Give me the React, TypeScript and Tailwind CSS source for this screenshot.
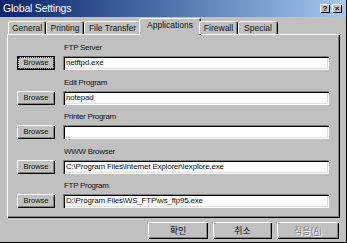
import React from "react";

const FONT = { fontFamily: '"Liberation Sans", Arial, "Noto Sans CJK KR", sans-serif' };
const KFONT = { fontFamily: '"Noto Sans CJK KR", "Liberation Sans", sans-serif' };

const rows = [
  { label: "FTP Server", value: "netftpd.exe", focus: true },
  { label: "Edit Program", value: "notepad" },
  { label: "Printer Program", value: "" },
  { label: "WWW Browser", value: "C:\\Program Files\\Internet Explorer\\Iexplore.exe" },
  { label: "FTP Program", value: "D:\\Program Files\\WS_FTP\\ws_ftp95.exe" },
];

const tabs = [
  { name: "General", w: "w-[38px]" },
  { name: "Printing", w: "w-[38px]" },
  { name: "File Transfer", w: "w-[57px]" },
  { name: "Applications", w: "w-[62px]", sel: true },
  { name: "Firewall", w: "w-[39px]" },
  { name: "Special", w: "w-[40px]" },
];

export default function App() {
  return (
    <div
      className="w-[347px] h-[243px] bg-[#c0c0c0] flex flex-col overflow-hidden border-b border-r border-black text-[#111]"
      style={FONT}
    >
      {/* Title bar */}
      <div className="h-[17px] shrink-0 bg-gradient-to-r from-[#0a246a] to-[#a6caf0] flex items-center justify-between pl-[3px] pr-[4px]">
        <span className="text-white text-[10.5px] leading-none tracking-[-0.2px]">Global Settings</span>
        <div className="flex gap-[2px]">
          <div className="w-[10px] h-[9px] bg-[#c0c0c0] shadow-[inset_1px_1px_0_#fff,inset_-1px_-1px_0_#000] flex items-center justify-center text-[8px] font-bold leading-none text-black">?</div>
          <div className="w-[10px] h-[9px] bg-[#c0c0c0] shadow-[inset_1px_1px_0_#fff,inset_-1px_-1px_0_#000] flex items-center justify-center text-[8px] font-bold leading-none text-black">×</div>
        </div>
      </div>

      {/* Tabs */}
      <div className="h-[17px] shrink-0 flex items-end pl-[8px] relative z-10">
        {tabs.map((t) =>
          t.sel ? (
            <div
              key={t.name}
              className={`${t.w} -mx-[2px] h-[17px] -mb-[1px] bg-[#c0c0c0] rounded-t-[2px] shadow-[inset_1px_1px_0_#fff,inset_-1px_0_0_#000,inset_-2px_0_0_#808080] flex items-start justify-center pt-[3px] text-[8.5px] leading-none`}
            >
              {t.name}
            </div>
          ) : (
            <div
              key={t.name}
              className={`${t.w} h-[13px] bg-[#c0c0c0] rounded-t-[2px] shadow-[inset_1px_1px_0_#fff,inset_-1px_0_0_#000,inset_-2px_0_0_#808080] flex items-start justify-center pt-[3px] text-[8.5px] leading-none`}
            >
              {t.name}
            </div>
          )
        )}
      </div>

      {/* Panel */}
      <div className="ml-[7px] w-[333px] h-[184px] shrink-0 shadow-[inset_1px_1px_0_#fff,inset_-1px_-1px_0_#000,inset_-2px_-2px_0_#808080] pt-[8px] pl-[10px] flex flex-col gap-[6.5px]">
        {rows.map((r) => (
          <div key={r.label} className="flex flex-col">
            <div className="h-[12px] ml-[47px] text-[8px] leading-[12px] tracking-[-0.3px]">{r.label}</div>
            <div className="flex items-center gap-[8px] mt-[2px] h-[14px]">
              <div
                className={`w-[38px] h-[14px] flex items-center justify-center text-[7.5px] leading-none ${
                  r.focus
                    ? "shadow-[inset_1px_1px_0_#000,inset_-1px_-1px_0_#000,inset_2px_2px_0_#fff,inset_-2px_-2px_0_#808080]"
                    : "shadow-[inset_1px_1px_0_#fff,inset_-1px_-1px_0_#000,inset_-2px_-2px_0_#808080]"
                }`}
              >
                <span className={r.focus ? "border border-dotted border-black px-[4px] py-[1px]" : ""}>Browse</span>
              </div>
              <div className="w-[266px] h-[14px] bg-white shadow-[inset_1px_1px_0_#808080,inset_2px_2px_0_#000,inset_-1px_-1px_0_#fff,inset_-2px_-2px_0_#dfdfdf] flex items-center pl-[3px] text-[8px] leading-none tracking-[-0.2px] whitespace-nowrap overflow-hidden">
                {r.value}
              </div>
            </div>
          </div>
        ))}
      </div>

      {/* Buttons */}
      <div className="flex justify-end gap-[5px] pr-[7px] mt-[4px]" style={KFONT}>
        <div className="w-[60px] h-[17px] flex items-center justify-center text-[9px] leading-none shadow-[inset_1px_1px_0_#fff,inset_-1px_-1px_0_#000,inset_-2px_-2px_0_#808080]">확인</div>
        <div className="w-[59px] h-[17px] flex items-center justify-center text-[9px] leading-none shadow-[inset_1px_1px_0_#fff,inset_-1px_-1px_0_#000,inset_-2px_-2px_0_#808080]">취소</div>
        <div className="w-[62px] h-[17px] flex items-center justify-center text-[9px] leading-none text-[#808080] [text-shadow:1px_1px_0_#fff] shadow-[inset_1px_1px_0_#fff,inset_-1px_-1px_0_#000,inset_-2px_-2px_0_#808080]">
          적용(<span className="underline">A</span>)
        </div>
      </div>
    </div>
  );
}
